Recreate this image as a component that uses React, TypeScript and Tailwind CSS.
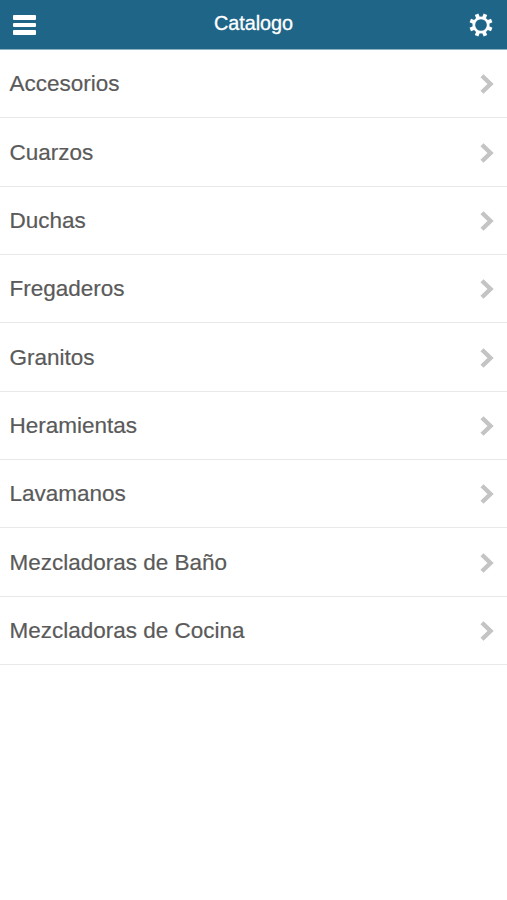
const items = ['Accesorios','Cuarzos','Duchas','Fregaderos','Granitos','Heramientas','Lavamanos','Mezcladoras de Baño','Mezcladoras de Cocina'];

function Gear() {
  return (
    <svg viewBox="0 0 24 24" className="h-6 w-6" fill="none" stroke="white">
      <circle cx="12" cy="12" r="7.2" strokeWidth="2.7" />
      {[22.5, 67.5, 112.5, 157.5, 202.5, 247.5, 292.5, 337.5].map((a) => (
        <path key={a} d="M10.1 4.5V0.4H13.9V4.5Z" fill="white" stroke="none" transform={`rotate(${a} 12 12)`} />
      ))}
    </svg>
  );
}

export default function App() {
  return (
    <div className="min-h-[900px] w-full bg-white font-['Liberation_Sans',Arial,sans-serif]">
      <header className="grid h-[50px] grid-cols-[1fr_auto_1fr] items-center border-b border-[#8db4c5] bg-[#1f6587] pr-[14px] pl-[13px] text-white">
        <button aria-label="Menu" className="flex w-[23px] flex-col gap-[3px] pt-px">
          <span className="h-[4.5px] rounded-[1px] bg-white" />
          <span className="h-[4.5px] rounded-[1px] bg-white" />
          <span className="h-[4.5px] rounded-[1px] bg-white" />
        </button>
        <h1 className="pb-px pl-px text-[19.8px] leading-none [-webkit-text-stroke:0.3px_white]">Catalogo</h1>
        <button aria-label="Settings" className="justify-self-end pt-px"><Gear /></button>
      </header>
      <ul>
        {items.map((item) => (
          <li key={item} className="flex h-[68.35px] items-center justify-between border-b border-[#e9e9e9] pt-px pr-[13px] pl-[9.5px] text-[22.5px] text-[#5a5a5a] [-webkit-text-stroke:0.2px_#5a5a5a]">
            <span>{item}</span>
            <svg viewBox="0 0 14 20" className="h-5 w-3.5" fill="none" stroke="#c4c4c4" strokeWidth="4.4"><path d="M2 1.7L10.5 10L2 18.3" /></svg>
          </li>
        ))}
      </ul>
    </div>
  );
}
